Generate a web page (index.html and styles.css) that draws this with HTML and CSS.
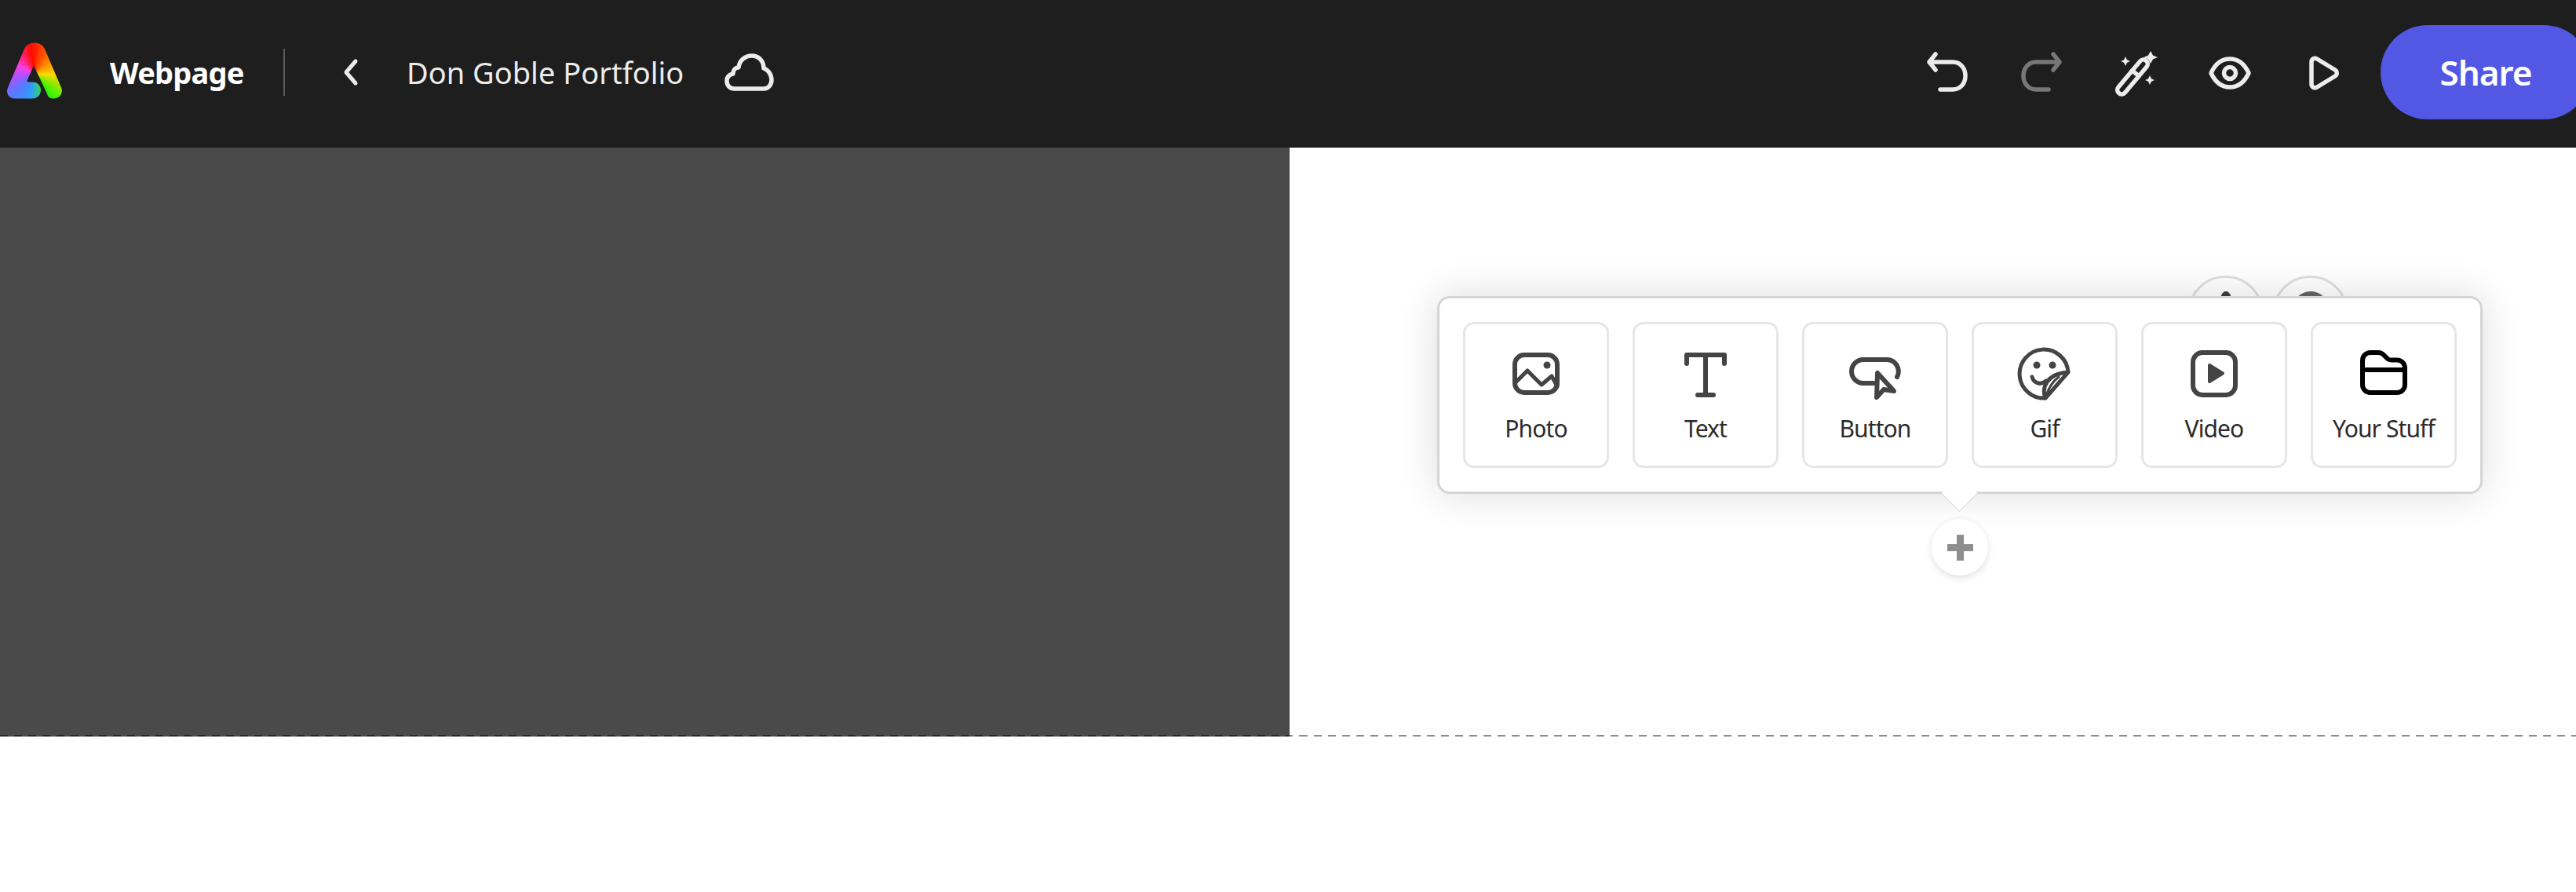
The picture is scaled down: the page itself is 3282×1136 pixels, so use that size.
FILE: index.html
```html
<!DOCTYPE html>
<html lang="en">
<head>
<meta charset="utf-8">
<title>Don Goble Portfolio</title>
<link rel="stylesheet" href="styles.css">
</head>
<body>
<header class="topbar">
  <div class="topbar-left">
    <div class="logo" aria-label="Adobe Express"></div>
    <span class="doc-type">Webpage</span>
    <span class="divider"></span>
    <svg class="back" viewBox="0 0 24 40"><path d="M19 6 7 20l12 14"/></svg>
    <span class="doc-title">Don Goble Portfolio</span>
    <svg class="cloud" viewBox="0 0 72 60"><path d="M17 51C10 51 7 46 7 41C7 36 10 33 15 32C15 27 18 24 22 24C23 15 30 9 39 9C48 9 54 16 54 25C60 27 64 33 64 40C64 46 60 51 54 51Z"/></svg>
  </div>
  <div class="topbar-right">
    <button class="tool">
      <svg viewBox="0 0 72 72"><path d="M21 13 13 23l8 10M13 23H43C53 23 59 31 59 40.500S53 58 43 58H27"/></svg>
    </button>
    <button class="tool tool-off">
      <svg viewBox="0 0 72 72"><path d="M51 13l8 10-8 10M59 23H29C19 23 13 31 13 40.500S19 58 29 58H45"/></svg>
    </button>
    <button class="tool">
      <svg viewBox="0 0 72 72">
        <rect x="-5.500" y="-27" width="11" height="54" rx="5.500" transform="translate(32 42) rotate(40)"/>
        <path d="M-5.500-6H5.500" transform="translate(32 42) rotate(40)"/>
        <path class="spark" d="M55 9l3 5.500L64 17l-6 2.500L55 25l-3-5.500L46 17l6-2.500ZM23 16l2 4.200L29 22l-4 1.800L23 28l-2-4.200L17 22l4-1.800ZM54 40l2 4.200L60 46l-4 1.800L54 52l-2-4.200L48 46l4-1.800Z"/>
      </svg>
    </button>
    <button class="tool">
      <svg viewBox="0 0 72 72">
        <path d="M12 37C18 24 27 19 36 19S54 24 60 37C54 50 45 55 36 55S18 50 12 37Z"/>
        <circle cx="36" cy="37" r="7.500"/>
      </svg>
    </button>
    <button class="tool">
      <svg viewBox="0 0 72 72"><path d="M20 23C20 19 24 17 27 19L50 33C53 35 53 39 50 41L27 55C24 57 20 55 20 51Z"/></svg>
    </button>
    <button class="share">Share</button>
  </div>
</header>
<main class="canvas">
  <section class="panel-dark"></section>
  <section class="panel-light">
    <div class="handle handle-one"><span class="handle-dot"></span></div>
    <div class="handle handle-two"><span class="handle-dot handle-dot-wide"></span></div>
    <div class="picker">
      <button class="card">
        <svg viewBox="0 0 72 72">
          <rect x="9" y="10" width="54" height="48" rx="12"/>
          <path class="thin" d="M10 45 25 30 43 48 56 37 63 50"/>
          <circle class="solid" cx="50" cy="23" r="4.500"/>
        </svg>
        <span>Photo</span>
      </button>
      <button class="card">
        <svg viewBox="0 0 72 72"><path d="M12 21V10H60V21M36 10V61M26 61H46"/></svg>
        <span>Text</span>
      </button>
      <button class="card">
        <svg viewBox="0 0 72 72">
          <path d="M34 46H21A15 15 0 0 1 21 16H51A15 15 0 0 1 64 38"/>
          <path class="pointer" d="M39 33 38 64 47 54 60 56Z"/>
        </svg>
        <span>Button</span>
      </button>
      <button class="card">
        <svg viewBox="0 0 72 72">
          <path class="thin" d="M37 65A31 31 0 1 1 66 32L37 65C32 52 38 34 66 32"/>
          <path class="vein" d="M38 62C41 52 46 44 54 38"/>
          <path class="thin" d="M20 38C22 46 31 49 38 43"/>
          <circle class="solid" cx="26" cy="23" r="4.500"/>
          <circle class="solid" cx="46" cy="23" r="4.500"/>
        </svg>
        <span>Gif</span>
      </button>
      <button class="card">
        <svg viewBox="0 0 72 72">
          <rect x="9" y="7" width="54" height="54" rx="12"/>
          <path class="solid-join" d="M30 23 47 33.500 30 44Z"/>
        </svg>
        <span>Video</span>
      </button>
      <button class="card card-black">
        <svg viewBox="0 0 72 72"><path d="M9 28V17A10 10 0 0 1 19 7H29C32 7 34 8 36 10L41 15C42 16 44 16.500 46 16.500H53A10 10 0 0 1 63 26.500V48A10 10 0 0 1 53 58H19A10 10 0 0 1 9 48ZM9 29H63"/></svg>
        <span>Your Stuff</span>
      </button>
      <span class="picker-arrow"></span>
    </div>
    <button class="add"><span class="add-h"></span><span class="add-v"></span></button>
  </section>
  <div class="dash-dark"></div>
  <div class="dash-light"></div>
</main>
</body>
</html>
```
FILE: styles.css
```css
* { box-sizing: border-box; }
html, body { margin: 0; padding: 0; }
body {
  width: 100%;
  height: 1136px;
  overflow: hidden;
  background: #fff;
  font-family: "Noto Sans", Lato, sans-serif;
}
button {
  font: inherit;
  border: 0;
  background: none;
  padding: 0;
}
svg { display: block; fill: none; stroke-linecap: round; stroke-linejoin: round; }

.topbar {
  height: 188px;
  padding-bottom: 4px;
  background: #1e1e1e;
  display: flex;
  align-items: center;
  justify-content: space-between;
  color: #fff;
}
.topbar-left { display: flex; align-items: center; padding-left: 8px; }
.logo {
  width: 72px;
  height: 73px;
  margin-top: -4px;
  background: conic-gradient(from -8deg at 50% 55%, #ff0a00 0deg, #ff7a00 50deg, #ffd800 100deg, #38f500 148deg, #2f9cff 200deg, #5a78ff 235deg, #b050ff 270deg, #ff3ce0 310deg, #ff0a00 360deg);
  clip-path: path("M23 9C25 4 30 1 36 1C42 1 47 4 49 9L70 58C73 65 68 72 60 72C56 72 53 70 52 66L35 30 27 48C26 50 27 51 29 51H34C40 51 44 56 44 61C44 68 39 72 33 72H11C3 72-1 65 2 58Z");
}
.doc-type {
  margin-left: 60px;
  width: 171px;
  font-size: 38px;
  font-weight: 700;
  letter-spacing: -.8px;
  white-space: nowrap;
}
.divider {
  width: 2px;
  height: 60px;
  margin-left: 50px;
  background: #5a5a5a;
}
.back {
  width: 24px;
  height: 40px;
  margin-left: 71px;
  stroke: #ececec;
  stroke-width: 5;
}
.doc-title {
  margin-left: 60px;
  width: 352px;
  font-size: 38px;
  font-weight: 400;
  color: #ececec;
  white-space: nowrap;
}
.cloud {
  width: 72px;
  height: 60px;
  margin-left: 49px;
  stroke: #ececec;
  stroke-width: 5.500;
}

.topbar-right { display: flex; align-items: center; margin-right: -19px; }
.tool {
  width: 120px;
  height: 120px;
  display: flex;
  align-items: center;
  justify-content: center;
}
.tool svg { width: 72px; height: 72px; stroke: #ececec; stroke-width: 5.500; }
.tool-off svg { stroke: #777; }
.tool .spark { fill: #ececec; stroke: none; }
.share {
  width: 268px;
  height: 120px;
  margin-left: 12px;
  border-radius: 60px;
  background: #5258e4;
  color: #fff;
  font-size: 44px;
  font-weight: 600;
  letter-spacing: -1px;
}

.canvas {
  position: relative;
  height: 750px;
  display: flex;
}
.panel-dark { width: 1643px; background: #4a4a4a; }
.panel-light { flex: 1; position: relative; background: #fff; }
.dash-dark, .dash-light {
  position: absolute;
  bottom: 0;
  height: 2px;
  background-image: repeating-linear-gradient(90deg, var(--dash) 0 10px, transparent 10px 18px);
}
.dash-dark { left: 0; width: 1643px; --dash: #262626; }
.dash-light { left: 1643px; right: 0; --dash: #8c8c8c; background-position-x: 13px; }

.handle {
  position: absolute;
  top: 163px;
  width: 97px;
  height: 97px;
  border: 3px solid #dedede;
  border-radius: 50%;
  display: flex;
  justify-content: center;
  overflow: hidden;
}
.handle-one { left: 1144px; }
.handle-two { left: 1252px; }
.handle-dot {
  width: 16px;
  height: 30px;
  margin-top: 17px;
  border-radius: 50%;
  background: #3d3d3d;
}
.handle-dot-wide { width: 46px; height: 46px; background: #666; }

.picker {
  position: absolute;
  left: 188px;
  top: 189px;
  display: flex;
  gap: 30px;
  padding: 30px;
  background: #fff;
  border: 3px solid #d5d5d5;
  border-radius: 16px;
  box-shadow: 0 0 50px rgba(0, 0, 0, .14);
}
.picker-arrow {
  position: absolute;
  left: 646px;
  bottom: -19px;
  width: 33px;
  height: 33px;
  background: #fff;
  border-right: 1px solid #d8d8d8;
  border-bottom: 1px solid #d8d8d8;
  transform: rotate(45deg);
}
.card {
  width: 186px;
  height: 186px;
  padding-top: 29px;
  display: flex;
  flex-direction: column;
  align-items: center;
  border: 3px solid #e6e6e6;
  border-radius: 14px;
  color: #2c2c2c;
  font-size: 30px;
  line-height: 40px;
  letter-spacing: -.9px;
}
.card svg {
  width: 72px;
  height: 72px;
  stroke: #444;
  stroke-width: 6;
}
.card span { margin-top: 12px; white-space: nowrap; }
.card .thin { stroke-width: 5; }
.card .vein { stroke-width: 3; }
.card .solid { fill: #444; stroke: none; }
.card .solid-join { fill: #444; stroke-width: 4; }
.card .pointer { fill: #fff; stroke-width: 6; }
.card-black svg { stroke: #000; }

.add {
  position: absolute;
  left: 818px;
  top: 473px;
  width: 72px;
  height: 72px;
  border-radius: 50%;
  background: #fff;
  box-shadow: 0 3px 10px rgba(0, 0, 0, .12);
  display: flex;
  align-items: center;
  justify-content: center;
}
.add-h, .add-v { position: absolute; background: #8e8e8e; }
.add-h { width: 33px; height: 9px; }
.add-v { width: 9px; height: 33px; }
```
